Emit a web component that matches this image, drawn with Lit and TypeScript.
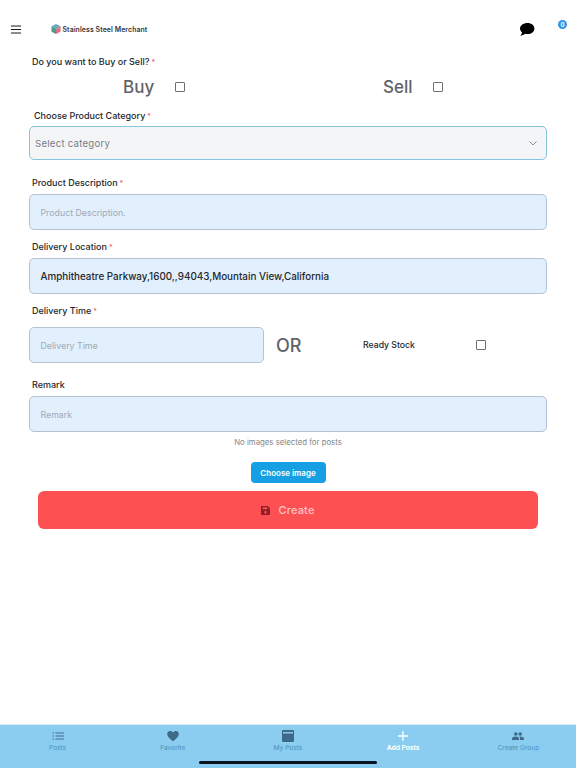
import { LitElement, html, css } from "lit";
import { customElement } from "lit/decorators.js";

@customElement("app-root")
export class AppRoot extends LitElement {
  static styles = css`
    :host { display: flex; flex-direction: column; width: 576px; height: 768px; background: #fff; overflow: hidden; font-family: Inter, "Noto Sans", sans-serif; color: #1f2328; position: relative; }
    * { box-sizing: border-box; }
    .header { height: 54px; flex: none; display: flex; align-items: flex-start; position: relative; }
    .menu { margin: 25px 0 0 11px; width: 10px; height: 9px; display: block; }
    .logo { margin: 23px 0 0 30px; width: 10px; height: 12px; display: block; }
    .brand { margin: 25px 0 0 1.500px; font-size: 6.900px; line-height: 9px; font-weight: 600; color: #33363a; letter-spacing: .1px; }
    .chat { position: absolute; left: 519px; top: 22px; width: 16px; height: 15px; }
    .badge { position: absolute; left: 558px; top: 20px; width: 9px; height: 9px; border-radius: 50%; background: #2f95e8; color: #fff; font-size: 6px; line-height: 9px; text-align: center; font-weight: 700; }
    .form { display: flex; flex-direction: column; padding: 0 29px; flex: 1; }
    .label { font-size: 9px; line-height: 16px; height: 16px; font-weight: 500; color: #24272b; padding-left: 3px; }
    .req { color: #ef5b6b; font-size: 7px; margin-left: 2px; line-height: 0; }
    .buysell { display: grid; grid-template-columns: 258px 258px; height: 32px; margin: 1px 0 5px; }
    .choice { display: flex; align-items: center; font-size: 17px; color: #5f6368; font-weight: 500; }
    .choice.buy { padding-left: 94px; gap: 21px; }
    .choice.sell { padding-left: 96px; gap: 20px; }
    .check { width: 10px; height: 10px; border: 1.200px solid #6d7074; border-radius: 1px; background: #fff; flex: none; }
    .label.cat { padding-left: 5px; margin-bottom: 2px; }
    .select { height: 34px; border: 1px solid #86c3dc; border-radius: 5px; background: #f3f5f7; display: flex; align-items: center; justify-content: space-between; padding: 0 9px 0 5px; font-size: 9.600px; color: #7a7d81; letter-spacing: .25px; margin-bottom: 15px; }
    .select svg { width: 8px; height: 5px; display: block; }
    .input { height: 36px; border: 1px solid #b4c3d3; border-radius: 5px; background: #e2effc; display: flex; align-items: center; padding-left: 10.500px; font-size: 8.800px; color: #a0aab5; }
    .input.val { color: #25282c; font-size: 9.850px; font-weight: 500; padding-bottom: 1px; }
    .first { margin: 0 0 3px; }
    .gap { margin: 9px 0 3px; }
    .time { margin: 9px 0 8px; }
    .rem { margin: 14px 0 3px; }
    .row { display: flex; align-items: center; height: 36px; }
    .row .input { width: 235px; flex: none; }
    .or { margin-left: 12px; font-size: 18px; color: #5f6368; width: 87px; font-weight: 500; }
    .ready { font-size: 8.700px; font-weight: 500; color: #24272b; width: 113px; }
    .note { text-align: center; font-size: 7.800px; color: #84878b; line-height: 10px; margin-top: 5px; }
    .choose { align-self: center; margin-top: 15px; width: 75px; height: 21px; border: 0; border-radius: 4px; background: #169fe2; color: #fff; font: 600 8px Inter, sans-serif; padding: 0; }
    .create { margin: 8px 9px 0; height: 38px; border: 0; border-radius: 6px; background: #fd5052; color: #ffc4c4; font: 500 11px Inter, sans-serif; display: flex; align-items: center; justify-content: center; gap: 8px; padding: 0; letter-spacing: .2px; }
    .create svg { width: 9px; height: 9px; display: block; }
    .tabs { flex: none; height: 43px; background: #8acdf0; display: grid; grid-template-columns: repeat(5, 115.200px); position: relative; box-shadow: 0 -1px 1px #dfe8ee; }
    .tab { display: flex; flex-direction: column; align-items: center; font-size: 6.600px; color: #4e90b4; line-height: 8px; padding-top: 5px; }
    .tab svg { width: 12px; height: 12px; display: block; margin-bottom: 2px; }
    .tab.on { color: #fff; font-weight: 700; }
    .home { position: absolute; left: 199px; bottom: 4px; width: 178px; height: 3px; border-radius: 2px; background: #0b1220; }
  `;

  private label(t: string, req = true, cls = "") {
    return html`<div class="label ${cls}">${t}${req ? html`<span class="req">*</span>` : ""}</div>`;
  }

  render() {
    return html`
      <div class="header">
        <svg class="menu" viewBox="0 0 10 9"><path d="M0 1h10M0 4.500h10M0 8h10" stroke="#1c1c1c" stroke-width="1.100" fill="none"/></svg>
        <svg class="logo" viewBox="0 0 10 12">
          <path d="M5 1 9.500 3.300 5 6 .5 3.300z" fill="#6aa7c0"/>
          <path d="M.5 3.300 5 6v5L.5 8.700z" fill="#4a9a8f"/>
          <path d="M9.500 3.300 5 6v5l4.500-2.300z" fill="#e0707c"/>
        </svg>
        <div class="brand">Stainless Steel Merchant</div>
        <svg class="chat" viewBox="0 0 16 15"><path d="M8.500 1C4.400 1 1 3.400 1 6.600c0 1.500.8 2.800 2 3.800-.2 1.200-.9 2.500-1.700 3.300 1.700-.1 3.600-.9 4.800-1.900.8.200 1.600.3 2.400.3 4 0 6.900-2.500 6.900-5.600S12.500 1 8.500 1z" fill="#000"/></svg>
        <div class="badge">0</div>
      </div>
      <div class="form">
        ${this.label("Do you want to Buy or Sell?")}
        <div class="buysell">
          <div class="choice buy">Buy<span class="check"></span></div>
          <div class="choice sell">Sell<span class="check"></span></div>
        </div>
        ${this.label("Choose Product Category", true, "cat")}
        <div class="select">Select category
          <svg viewBox="0 0 8 5"><path d="M.5.5 4 4 7.500.5" stroke="#8b8e92" fill="none"/></svg>
        </div>
        ${this.label("Product Description", true, "first")}
        <div class="input">Product Description.</div>
        ${this.label("Delivery Location", true, "gap")}
        <div class="input val">Amphitheatre Parkway,1600,,94043,Mountain View,California</div>
        ${this.label("Delivery Time", true, "time")}
        <div class="row">
          <div class="input">Delivery Time</div>
          <div class="or">OR</div>
          <div class="ready">Ready Stock</div>
          <span class="check"></span>
        </div>
        ${this.label("Remark", false, "rem")}
        <div class="input">Remark</div>
        <div class="note">No images selected for posts</div>
        <button class="choose">Choose image</button>
        <button class="create">
          <svg viewBox="0 0 10 10"><path d="M1 0h6.500L10 2.500V9a1 1 0 0 1-1 1H1a1 1 0 0 1-1-1V1a1 1 0 0 1 1-1zM2 1.500v2h5v-2zM5 5.500a1.500 1.500 0 1 0 0 3 1.500 1.500 0 0 0 0-3z" fill="#8e1f25" fill-rule="evenodd"/></svg>
          Create
        </button>
      </div>
      <div class="tabs">
        <div class="tab"><svg viewBox="0 0 12 12"><path d="M3.500 3H12M3.500 6H12M3.500 9H12M.5 3h1.500M.5 6h1.500M.5 9h1.500" stroke="#3f6f8e" stroke-width="1.200" fill="none"/></svg>Posts</div>
        <div class="tab"><svg viewBox="0 0 12 12"><path d="M6 11.200C2 8 .2 6.200.2 3.900.2 2.200 1.600 1 3.200 1 4.400 1 5.400 1.600 6 2.600 6.600 1.600 7.600 1 8.800 1c1.600 0 3 1.200 3 2.900 0 2.300-1.800 4.100-5.800 7.300z" fill="#3d6a88"/></svg>Favorite</div>
        <div class="tab"><svg viewBox="0 0 12 12"><path d="M1 0h10a1 1 0 0 1 1 1v10a1 1 0 0 1-1 1H1a1 1 0 0 1-1-1V1a1 1 0 0 1 1-1zM1 2v1.500h10V2z" fill="#3d6a88" fill-rule="evenodd"/></svg>My Posts</div>
        <div class="tab on"><svg viewBox="0 0 12 12"><path d="M6 1v10M1 6h10" stroke="#fff" stroke-width="1.400"/></svg>Add Posts</div>
        <div class="tab"><svg viewBox="0 0 12 12"><circle cx="3.800" cy="4" r="1.800" fill="#3d6a88"/><circle cx="8.200" cy="4" r="1.800" fill="#3d6a88"/><path d="M0 10V8.500C0 7.200 2 6.500 3.800 6.500S7 7.200 7 8.500V10zM8 10V8.500c0-.8-.3-1.400-.8-1.900.4-.1.700-.1 1-.1 1.800 0 3.800.7 3.800 2V10z" fill="#3d6a88"/></svg>Create Group</div>
        <div class="home"></div>
      </div>
    `;
  }
}
